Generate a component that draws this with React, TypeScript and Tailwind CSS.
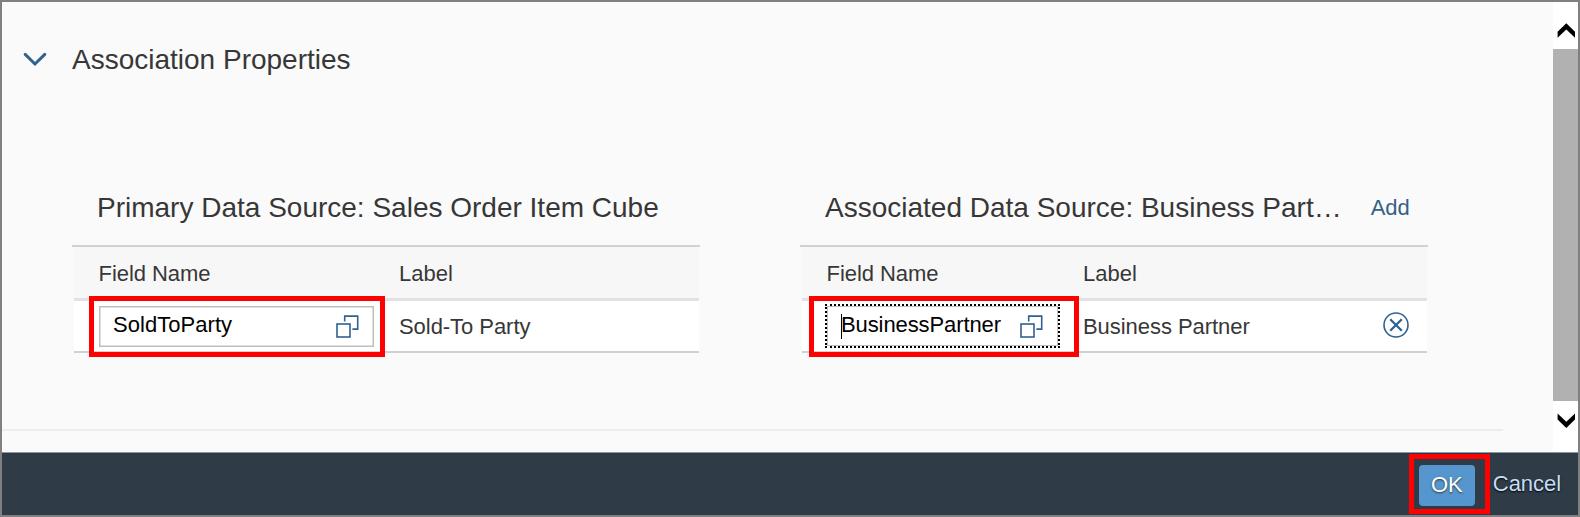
import React from "react";

function ValueHelpIcon({ className }: { className: string }) {
  return (
    <svg width="23" height="23" viewBox="0 0 23 23" fill="none" stroke="#2f628f" strokeWidth="1.6" className={className}>
      <rect x="1" y="9" width="13" height="13" />
      <path d="M8.7 6.4V1.1H21.7V14.1H16.4" />
    </svg>
  );
}

function DeclineIcon() {
  return (
    <svg width="26" height="26" viewBox="0 0 26 26" fill="none" stroke="#2f628f">
      <circle cx="13" cy="13" r="12" strokeWidth="1.6" />
      <path d="M7.2 7.2L18.8 18.8M18.8 7.2L7.2 18.8" strokeWidth="2.3" />
    </svg>
  );
}

function Highlight({ className }: { className: string }) {
  return <div className={`pointer-events-none absolute border-[5px] border-[#ff0000] ${className}`} />;
}

interface TableProps {
  title: string;
  titleClass: string;
  action?: string;
  fieldClass: string;
  field: React.ReactNode;
  label: string;
  rowAction?: React.ReactNode;
  highlightClass: string;
}

function SourceTable(props: TableProps) {
  return (
    <section className="w-[628px] shrink-0">
      <div className="flex h-[54px] items-start pt-px">
        <h3 className={`truncate text-[28px] leading-[32px] ${props.titleClass}`}>{props.title}</h3>
        {props.action && (
          <button className="ml-[29px] mt-[3px] h-[26px] text-[22px] leading-[26px] text-[#346187]">{props.action}</button>
        )}
      </div>
      <div className="h-[2px] bg-[#d1d1d1]" />
      <div className="ml-[2px] mr-[1px] flex h-[51px] bg-[#f7f7f7] pt-[14px] text-[22px] leading-[26px]">
        <div className={`shrink-0 pl-[24.5px] tracking-[-0.05px] ${props.fieldClass}`}>Field Name</div>
        <div>Label</div>
      </div>
      <div className="ml-[2px] mr-[1px] h-[3px] bg-[#e2e2e2]" />
      <div className="relative ml-[2px] mr-[1px] flex h-[52px] border-b-2 border-[#d1d1d1] bg-white text-[22px] leading-[26px]">
        <div className={`shrink-0 pl-[24px] ${props.fieldClass}`}>{props.field}</div>
        <div className="pt-[13px] tracking-[-0.05px]">{props.label}</div>
        {props.rowAction && <button className="ml-auto mr-[18.5px] mt-[11px] h-[26px]">{props.rowAction}</button>}
        <Highlight className={props.highlightClass} />
      </div>
    </section>
  );
}

export default function App() {
  return (
    <div className="flex h-[517px] w-[1580px] flex-col overflow-hidden border-2 border-[#808080] bg-[#fafafa] font-['Liberation_Sans',Arial,sans-serif] text-[#373737]">
      <div className="flex h-[450px] shrink-0 border-b border-white">
        <main className="w-[1551px] shrink-0">
          <header className="flex h-[74px] items-end">
            <svg width="24" height="16" viewBox="0 0 24 16" fill="none" stroke="#2f628f" strokeWidth="3" className="mb-[8px] ml-[21px]">
              <path d="M2.2 2.4L12 12L21.8 2.4" strokeLinecap="round" />
            </svg>
            <h2 className="ml-[25px] text-[28px] leading-[32px]">Association Properties</h2>
          </header>
          <div className="mt-[115px] flex gap-[100px] pl-[70px]">
            <SourceTable
              title="Primary Data Source: Sales Order Item Cube"
              titleClass="pl-[25px]"
              fieldClass="w-[325px]"
              label="Sold-To Party"
              highlightClass="-top-[5px] left-[15px] h-[61px] w-[296px]"
              field={
                <div className="ml-[1px] mt-[5px] flex h-[41px] w-[275px] border-[1.5px] border-[#bfbfbf] bg-white pl-[13px] text-black shadow-[inset_0_0_0_0.5px_#bfbfbf]">
                  <span className="mt-[5px] tracking-[0.05px]">SoldToParty</span>
                  <ValueHelpIcon className="ml-auto mr-[14px] mt-[8px]" />
                </div>
              }
            />
            <SourceTable
              title="Associated Data Source: Business Part…"
              titleClass="pl-[25px]"
              action="Add"
              fieldClass="w-[281px]"
              label="Business Partner"
              rowAction={<DeclineIcon />}
              highlightClass="-top-[5px] left-[7px] h-[61px] w-[270px]"
              field={
                <div className="-ml-[1px] mt-[3px] h-[44px] w-[235px] border-2 border-dotted border-black">
                  <div className="relative flex h-[40px] border border-[#bfbfbf] bg-white pl-[13px] text-black">
                    <span className="mt-[5px] tracking-[-0.1px]">BusinessPartner</span>
                    <span className="absolute left-[13px] top-[7px] h-[25px] w-px bg-black" />
                    <ValueHelpIcon className="ml-auto mr-[14px] mt-[8px]" />
                  </div>
                </div>
              }
            />
          </div>
          <div className="mt-[76px] h-[2px] w-[1501px] bg-[#ededed]" />
        </main>
        <aside className="flex w-[25px] flex-col items-center bg-white">
          <svg width="25" height="47" viewBox="0 0 25 47" fill="#000">
            <path d="M13.3 21.3L22 29.8V35.8L13.3 27.6L4.6 35.8V29.8Z" />
          </svg>
          <div className="h-[352px] w-full bg-[#b1b1b1]" />
          <svg width="25" height="50" viewBox="0 0 25 50" fill="#000">
            <path d="M13.3 27L22 18.5V12.5L13.3 20.7L4.6 12.5V18.5Z" />
          </svg>
        </aside>
      </div>
      <footer className="relative flex h-[63px] shrink-0 items-start justify-end border-t border-[#8497a5] bg-[#2f3c48] pr-[17px] text-[22px] leading-[26px]">
        <button className="mt-[12px] h-[41px] w-[56px] rounded-[4px] bg-[#5496cd] pb-[2px] text-white [text-shadow:0_1px_2px_#333]">OK</button>
        <button className="ml-[18px] mt-[18px] h-[26px] tracking-[-0.05px] text-[#c5def5] [text-shadow:0_1px_2px_#000]">Cancel</button>
        <Highlight className="left-[1407px] top-[1px] h-[60px] w-[81px]" />
      </footer>
    </div>
  );
}
